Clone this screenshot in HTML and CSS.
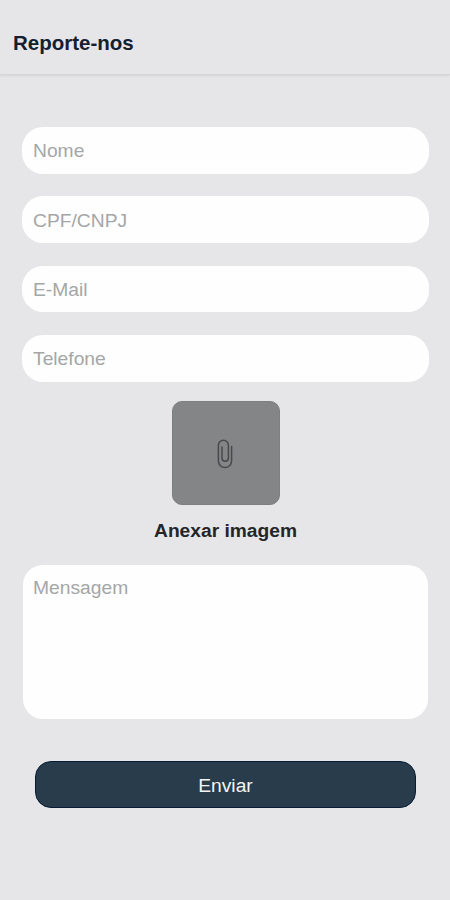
FILE: index.html
```html
<!DOCTYPE html>
<html lang="pt-BR">
<head>
<meta charset="utf-8">
<title>Reporte-nos</title>
<link rel="stylesheet" href="styles.css">
</head>
<body>
<header class="header"><h1 class="title">Reporte-nos</h1></header>
<form class="form">
  <div class="fields">
    <input class="field" type="text" placeholder="Nome">
    <input class="field" type="text" placeholder="CPF/CNPJ">
    <input class="field" type="text" placeholder="E-Mail">
    <input class="field" type="text" placeholder="Telefone">
  </div>
  <button class="attach" type="button" aria-label="Anexar imagem">
    <svg class="clip" viewBox="0 0 16 30" width="16" height="30">
      <path d="M14.6 7.5V22a6.6 6.6 0 0 1-13.2 0V6.2a5 5 0 0 1 10 0V19a3.2 3.2 0 0 1-6.4 0V8"/>
    </svg>
  </button>
  <p class="caption">Anexar imagem</p>
  <textarea class="message" placeholder="Mensagem"></textarea>
  <button class="submit" type="button">Enviar</button>
</form>
</body>
</html>
```
FILE: styles.css
```css
* { box-sizing: border-box; }
body {
  margin: 0;
  min-height: 900px;
  background: #e6e6e8;
  font-family: "Liberation Sans", Arial, sans-serif;
}
.header {
  display: flex;
  align-items: center;
  height: 75px;
  padding: 11px 13px 0;
  border-bottom: 1px solid #d6d6d8;
  box-shadow: 0 1px 2px rgba(0, 0, 0, .08);
}
.title {
  margin: 0;
  font-size: 20.5px;
  line-height: 24px;
  color: #14202f;
}
.form {
  display: flex;
  flex-direction: column;
  align-items: center;
  padding: 52px 21px 0 22px;
}
.fields {
  display: flex;
  flex-direction: column;
  gap: 22.8px;
  width: 100%;
}
.field, .message {
  display: block;
  width: 100%;
  border: 0;
  outline: 0;
  background: #fefefe;
  font: 19.25px "Liberation Sans", Arial, sans-serif;
  color: #333;
}
.field {
  height: 46.6px;
  padding: 2px 11px 0;
  border-radius: 21px;
}
.field::placeholder, .message::placeholder {
  color: #a5a6a6;
  opacity: 1;
}
.attach {
  display: flex;
  align-items: center;
  justify-content: center;
  width: 108px;
  height: 104px;
  margin-top: 19.4px;
  padding: 1px 1px 0 0;
  border: 1px solid #7c7e80;
  border-radius: 10px;
  background: #838587;
}
.clip {
  fill: none;
  stroke: #48494b;
  stroke-width: 1.5;
  stroke-linecap: round;
}
.caption {
  margin: 14px 0 0;
  font-size: 19.2px;
  line-height: 24px;
  font-weight: bold;
  color: #242529;
}
.message {
  width: 405px;
  height: 154px;
  margin-top: 22px;
  padding: 12px 10px;
  border-radius: 20px;
  resize: none;
}
.submit {
  width: 381px;
  height: 47px;
  margin-top: 42px;
  padding: 2px 0 0;
  border: 1.5px solid #071c35;
  border-radius: 16px;
  background: #283c4b;
  color: #f4f5f6;
  font: 19.25px "Liberation Sans", Arial, sans-serif;
}
```
